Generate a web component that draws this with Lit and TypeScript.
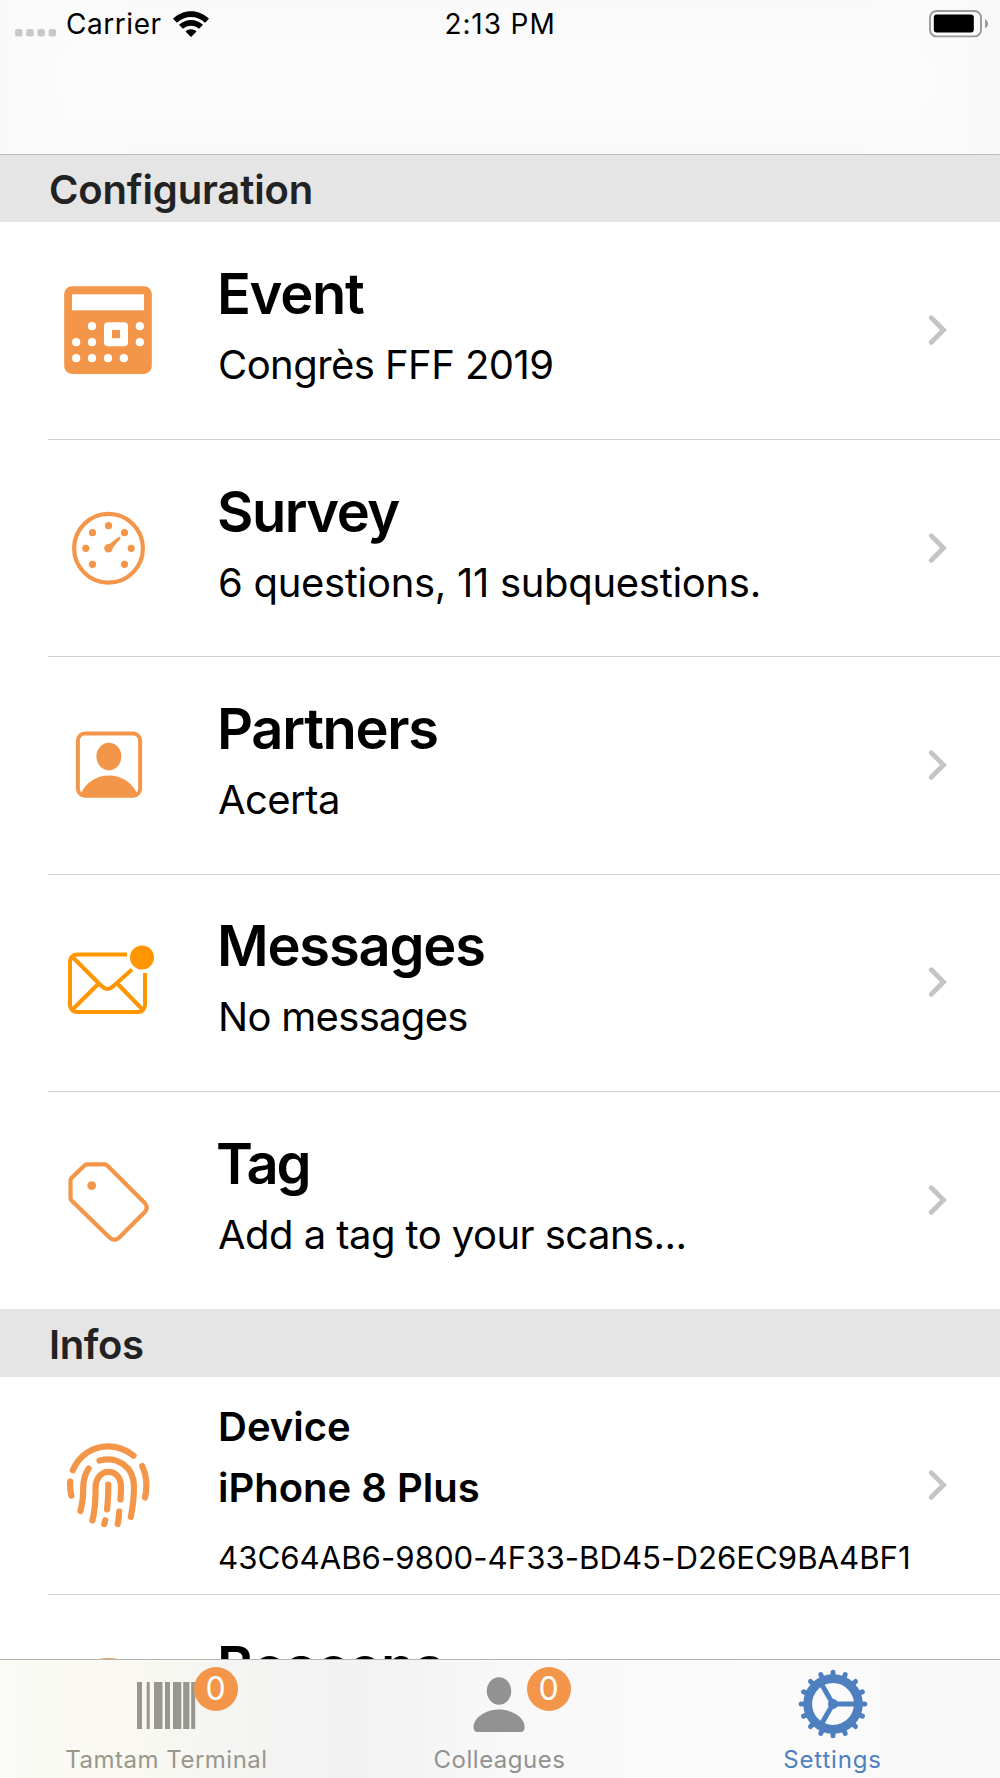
import { LitElement, html, css, svg, TemplateResult } from "lit";
import { customElement } from "lit/decorators.js";

interface Row { icon: TemplateResult; cls: string; title: string; sub: string; }

const eventIcon = html`<svg class="ic" viewBox="0 0 120 120"><rect x="16.200" y="16.300" width="87.600" height="87.600" rx="7.800" fill="#f4964a"/><rect x="24" y="24.300" width="72" height="16" fill="#fff"/><g fill="#fff">${[[44, 56.2], [91.800, 56.2], [28.200, 72.200], [44, 72.200], [91.800, 72.200], [28.200, 88.2], [44, 88.2], [60, 88.2], [75.800, 88.2]].map(([x, y]) => svg`<circle cx=${x} cy=${y} r="4.100"/>`)}<rect x="56" y="52.200" width="24" height="24" rx="4"/></g><rect x="64" y="60" width="8" height="8.200" fill="#f4964a"/></svg>`;

const surveyIcon = html`<svg class="ic" viewBox="0 0 120 120" fill="#f4964a"><circle cx="60.500" cy="60.300" r="34.400" fill="none" stroke="#f4964a" stroke-width="4.200"/>${[[60.500, 37.7], [44.500, 44.7], [76.500, 44.7], [37.800, 60.300], [83.200, 60.300], [44.500, 76.300], [76.500, 76.300]].map(([x, y]) => svg`<circle cx=${x} cy=${y} r="3.600"/>`)}<circle cx="60.500" cy="60.300" r="4.200"/><path d="M59.400 57.600 70.200 49.200Q71.500 48.400 72.200 49.100 73 50 72 51.200L63.300 61.600z"/></svg>`;

const partnersIcon = html`<svg class="ic" viewBox="0 0 120 120" fill="#f4964a"><rect x="29.900" y="28.500" width="62.200" height="62.200" rx="7" fill="none" stroke="#f4964a" stroke-width="4"/><ellipse cx="60.900" cy="51.600" rx="12.500" ry="13.800"/><path d="M33.500 87.500C37.500 78 48 70.400 60.900 70.400S84.500 78 88.500 87.500v4.500h-55z"/></svg>`;

const messagesIcon = html`<svg class="ic" viewBox="0 0 120 120" fill="none" stroke="#ff9500" stroke-width="4"><path d="M79 32.400H29a7 7 0 0 0-7 7v43.700a7 7 0 0 0 7 7h61a7 7 0 0 0 7-7V51"/><path d="M24 34.500 53.500 64q6 6 12 0L84 47.500"/><path d="M24 88 49.700 62.500M95 88 69.700 62"/><circle cx="94" cy="35.400" r="12" fill="#ff9500" stroke="none"/></svg>`;

const tagIcon = html`<svg class="ic" viewBox="0 2.800 120 120" fill="none" stroke="#f4964a" stroke-width="4.200" stroke-linejoin="round"><path d="M36.500 28.200Q37.500 27.200 39 27.200H56.700Q58.200 27.200 59.300 28.300L96.800 65.800Q100.600 70.300 96.800 74.800L71 100.500Q66.400 104.700 61.800 100.500L23.500 63.200Q22.500 62 22.500 60.500V43.300Q22.500 41.800 23.500 40.800z"/><circle cx="43.700" cy="48.400" r="4.400" fill="#f4964a" stroke="none"/></svg>`;

const fingerIcon = html`<svg class="ic" viewBox="0 0 120 120" fill="none" stroke="#f4964a" stroke-width="6.200" stroke-linecap="round"><path d="M24.800 38.200C31 23.500 44.500 14.400 60 14.400c9.500 0 18 3.200 25.500 9.200M51.500 28.600C69 23.500 86 35 86 54.500c0 10-1.200 20.500-3.200 30.500M40.500 36.600C37 42 35.200 48 35.200 56.500c0 9-.4 14.500-2.800 22.500M44.400 88.500C47.200 78 47.600 70 47.600 55c0-8 5.300-15.200 12.800-15.200S73 46 73 55c0 5-.2 8-.5 12.500M60.300 52.500c0 10-.2 17-1.300 25M71.200 79.500c-.2 5-.8 9-1.500 12.500M57.200 88.200l-1 4M94.200 34c4.500 10 5.200 21 2.800 31.500M22.200 49.700c-.3 5-.1 9 1.200 14"/></svg>`;

const beaconIcon = html`<svg class="ic" viewBox="0 0 120 120"><circle cx="60.500" cy="60.500" r="43.500" fill="none" stroke="#f4964a" stroke-width="4"/></svg>`;

@customElement("app-root")
export class AppRoot extends LitElement {
  static styles = css`
    :host { display: block; width: 1000px; height: 1778px; overflow: hidden; background: #fff; color: #000; font-family: Inter, "Liberation Sans", sans-serif; font-feature-settings: "calt" 0; }
    * { box-sizing: border-box; }
    .screen { height: 1778px; display: flex; flex-direction: column; }
    .top { height: 155px; flex: none; border-bottom: 1px solid #bebebe; padding: 0 15px; background: linear-gradient(90deg, #f9f9f9, #fbfbfb 5%, #f9f9f900 14%, #f9f9f900 86%, #fbfbfb 94%, #f8f8f8), linear-gradient(#f9f9f9, #fbfbfb 25%, #fdfdfd 45%, #fcfcfc 70%, #f9f9f9); }
    .status { display: grid; grid-template-columns: 1fr auto 1fr; height: 48px; align-items: center; font-size: 28px; line-height: 48px; }
    .carrier { display: flex; align-items: center; }
    .dots { width: 42px; height: 8px; margin: 17px 9px 0 0; }
    .name { letter-spacing: .55px; }
    .time { letter-spacing: .9px; }
    .wifi { width: 38px; height: 28px; margin-left: 10px; }
    .battery { justify-self: end; width: 60px; height: 28px; margin-right: -3px; }
    .head { height: 67px; flex: none; background: #e5e5e5; color: #222; padding-left: 49px; font-size: 40px; font-weight: 600; line-height: 70px; letter-spacing: -.15px; }
    .head.infos { height: 68px; line-height: 71px; letter-spacing: -.35px; }
    .list { flex: 1; min-height: 0; overflow: hidden; }
    .row { display: flex; height: 217.400px; margin-left: 48px; border-bottom: 1px solid #d1d1d4; align-items: center; padding: 0 52px 1px 0; }
    .row.event { height: 218px; }
    .row.tag { height: 217px; border: 0; padding-bottom: 2px; }
    .row.device { height: 218px; padding-bottom: 2px; }
    .ic { width: 120px; height: 120px; flex: none; display: block; }
    .text { flex: 1; margin-left: 49px; white-space: nowrap; }
    .title { font-size: 56px; font-weight: 600; line-height: 68px; margin-bottom: 2px; letter-spacing: -1.300px; }
    .sub { font-size: 40px; line-height: 70px; min-height: 70px; padding-left: 1px; letter-spacing: -.55px; }
    .survey .title { letter-spacing: -1.500px; }
    .messages .title { letter-spacing: -1.200px; }
    .beacons .title { letter-spacing: -1.100px; }
    .tag .title { letter-spacing: -2.300px; margin-left: -1px; }
    .survey .sub { letter-spacing: -.3px; }
    .messages .sub { letter-spacing: -.7px; }
    .chev { width: 20px; height: 32px; flex: none; }
    .device .ic { margin-top: 15px; }
    .device .text { padding-top: 24px; }
    .device .name1 { font-size: 40px; font-weight: 600; line-height: 61px; padding-left: 1px; }
    .uuid { font-size: 31.200px; line-height: 80px; padding-left: 1px; }
    .tabs { height: 119px; flex: none; border-top: 1px solid #b5b5b6; display: grid; grid-template-columns: repeat(3, 333px); background: linear-gradient(90deg, #fafaf6, #faf9f1 12%, #f5f5f3 22%, #f1f2f2 35%, #f4f4f4 42%, #f8f8f8 50%, #fbfbfb 75%, #f8f8f9); }
    .tab { display: flex; flex-direction: column; align-items: center; color: #929292; font-size: 24px; letter-spacing: .5px; }
    .glyph { position: relative; width: 80px; height: 84px; }
    .glyph svg { width: 80px; height: 84px; display: block; }
    .badge { position: absolute; left: 67px; top: 7px; width: 44px; height: 44px; border-radius: 50%; background: #f4964a; color: #fff; font-size: 32px; line-height: 43px; text-align: center; letter-spacing: 0; }
    .label { line-height: 32px; }
    .blue { color: #4e80c0; letter-spacing: .8px; }
    .olive { color: #98978d; }
  `;

  chevron() {
    return html`<svg class="chev" viewBox="0 0 20 32"><path d="M3.300 3.700 15.500 16 3.300 28.300" fill="none" stroke="#c4c4c6" stroke-width="4.800" stroke-linecap="round"/></svg>`;
  }

  row(r: Row) {
    return html`<div class="row ${r.cls}">${r.icon}<div class="text"><div class="title">${r.title}</div><div class="sub">${r.sub}</div></div>${this.chevron()}</div>`;
  }

  render() {
    const rows: Row[] = [
      { icon: eventIcon, cls: "event", title: "Event", sub: "Congrès FFF 2019" },
      { icon: surveyIcon, cls: "survey", title: "Survey", sub: "6 questions, 11 subquestions." },
      { icon: partnersIcon, cls: "partners", title: "Partners", sub: "Acerta" },
      { icon: messagesIcon, cls: "messages", title: "Messages", sub: "No messages" },
      { icon: tagIcon, cls: "tag", title: "Tag", sub: "Add a tag to your scans..." },
    ];
    return html`<div class="screen">
      <div class="top"><div class="status">
        <div class="carrier"><svg class="dots" viewBox="0 0 42 8" fill="#c8c8c8">${[0, 11.200, 22.400, 33.600].map(x => svg`<rect x=${x} width="7.500" height="7.500" rx="2.500"/>`)}</svg><span class="name">Carrier</span>
        <svg class="wifi" viewBox="0 0 38 28"><path d="M1 8.700C11-1.400 27-1.400 37 8.700L33 12.700C25 5 13 5 5 12.700zM7 14.800C14 8.300 24 8.300 31 14.800L27 18.800C22.500 14.800 15.500 14.800 11 18.800zM13.500 21.400C16.500 18.600 21.500 18.600 24.500 21.400L19 27z"/></svg></div>
        <span class="time">2:13 PM</span>
        <svg class="battery" viewBox="0 0 60 28"><rect x="2" y="1" width="51" height="25.400" rx="6.500" fill="none" stroke="#999" stroke-width="1.900"/><rect x="5.800" y="4.600" width="40" height="18" rx="3"/><path d="M57 9.200q3 1.500 3 4.500t-3 4.500z" fill="#999"/></svg>
      </div></div>
      <div class="list">
        <div class="head">Configuration</div>
        ${rows.map(r => this.row(r))}
        <div class="head infos">Infos</div>
        <div class="row device">${fingerIcon}<div class="text"><div class="name1">Device</div><div class="name1">iPhone 8 Plus</div><div class="uuid">43C64AB6-9800-4F33-BD45-D26EC9BA4BF1</div></div>${this.chevron()}</div>
        ${this.row({ icon: beaconIcon, cls: "beacons", title: "Beacons", sub: "" })}
      </div>
      <div class="tabs">
        <div class="tab"><div class="glyph"><svg viewBox="0 0 80 84" fill="#98978d">${[[10, 5], [19.700, 3], [27, 8.500], [38, 5], [46, 8.300], [56.200, 6.200], [64.200, 4]].map(([x, w]) => svg`<rect x=${x} y="22" width=${w} height="47"/>`)}</svg><div class="badge">0</div></div><span class="label olive">Tamtam Terminal</span></div>
        <div class="tab"><div class="glyph"><svg viewBox="0 0 80 84" fill="#929292"><ellipse cx="39" cy="31" rx="12.200" ry="13.700"/><path d="M13.500 67C13.500 58 25 49.500 39 49.500S64.700 58 64.700 67Q64.700 72 60.700 72H17.500Q13.500 72 13.500 67z"/></svg><div class="badge">0</div></div><span class="label">Colleagues</span></div>
        <div class="tab blue"><div class="glyph"><svg viewBox="-40 -44 80 84" fill="none" stroke="#4e80c0"><circle r="25.300" stroke-width="8.800"/>${Array.from({ length: 16 }, (_, i) => svg`<path d="M28.500 0H31.800" stroke-width="5" stroke-linecap="round" transform="rotate(${i * 22.5})"/>`)}<path d="M0 0H24M0 0L-12-20.800M0 0L-12 20.800" stroke-width="5"/><circle r="5" fill="#4e80c0" stroke="none"/></svg></div><span class="label">Settings</span></div>
      </div>
    </div>`;
  }
}
